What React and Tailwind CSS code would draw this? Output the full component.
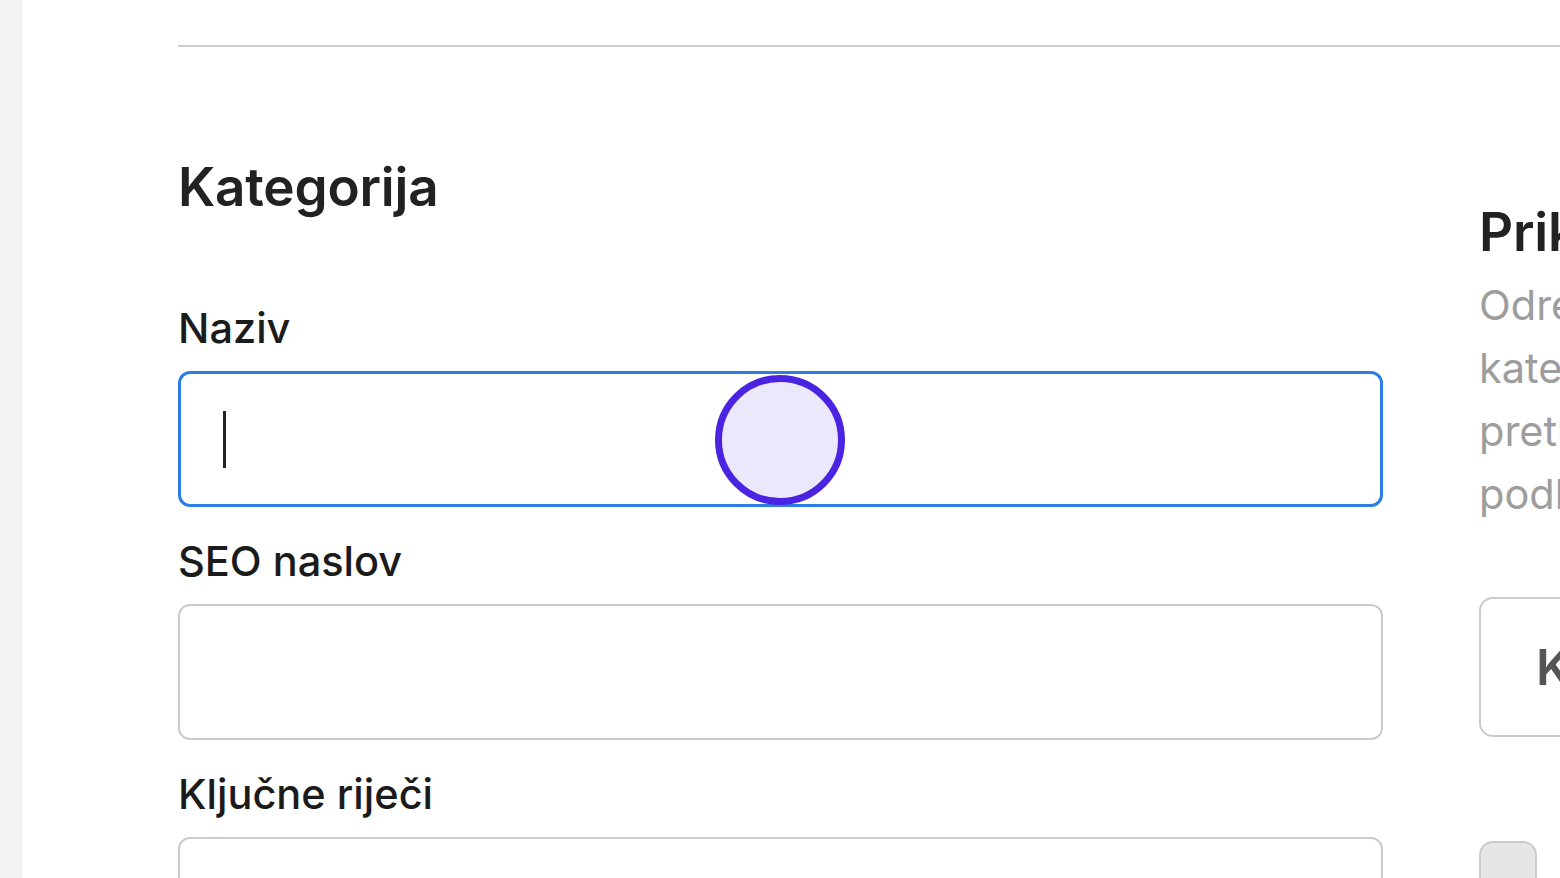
export default function App() {
    return (
        <div className="w-[1560px] h-[878px] overflow-hidden flex bg-white font-['Inter','Noto_Sans',sans-serif]">
            <div className="w-[22px] shrink-0 bg-[#f2f3f5]"></div>
            <div className="flex-1 min-w-0 pl-[156px] pt-[45px]">
                <div className="h-[2px] bg-[#cbcbcb] w-[1500px]"></div>

                <div className="flex gap-[96px]">
                    <section className="w-[1205px] shrink-0 pt-[107px]">
                        <h1 className="text-[53px] leading-[67px] font-semibold text-[#222] tracking-[-0.2px]">Kategorija</h1>

                        <div className="mt-[76px] space-y-[23px]">
                            <div>
                                <label className="block text-[41.5px] leading-[63px] font-medium text-[#1b1b1b] mb-[11px]">Naziv</label>
                                <div className="relative h-[136px] rounded-[12px] border-[3px] border-[#2c7fe0] flex items-center pl-[42px]">
                                    <span className="w-[3px] h-[57px] bg-[#222]"></span>
                                    <div className="absolute left-[534px] top-[1px] w-[130px] h-[130px] rounded-full border-[7px] border-[#4a24e0] bg-[#ece8fb]"></div>
                                </div>
                            </div>
                            <div>
                                <label className="block text-[41.5px] leading-[63px] font-medium text-[#1b1b1b] mb-[11px]">SEO naslov</label>
                                <div className="h-[136px] rounded-[12px] border-2 border-[#cbcbcb]"></div>
                            </div>
                            <div>
                                <label className="block text-[41.5px] leading-[63px] font-medium text-[#1b1b1b] mb-[11px]">Ključne riječi</label>
                                <div className="h-[136px] rounded-[12px] border-2 border-[#cbcbcb]"></div>
                            </div>
                        </div>
                    </section>

                    <aside className="w-[640px] shrink-0 pt-[152px]">
                        <h2 className="text-[53px] leading-[67px] font-semibold text-[#222] whitespace-nowrap tracking-[-0.2px]">Prikaz u tražilici</h2>
                        <p className="mt-[8px] text-[41.5px] leading-[63px] text-[#9d9d9d] whitespace-nowrap">
                            Određuje kako će se ova<br />
                            kategorija prikazati u rezultatima<br />
                            pretraživanja i koje će riječi biti<br />
                            podložne indeksiranju.
                        </p>
                        <div className="mt-[71px] h-[140px] rounded-[14px] border-2 border-[#cbcbcb] flex items-center pl-[55px]">
                            <span className="text-[50px] font-semibold text-[#555] whitespace-nowrap">Kategorija</span>
                        </div>
                        <div className="mt-[104px] w-[58px] h-[60px] rounded-[14px] border-2 border-[#cbcbcb] bg-[#e6e6e6]"></div>
                    </aside>
                </div>
            </div>
        </div>
    );
}
